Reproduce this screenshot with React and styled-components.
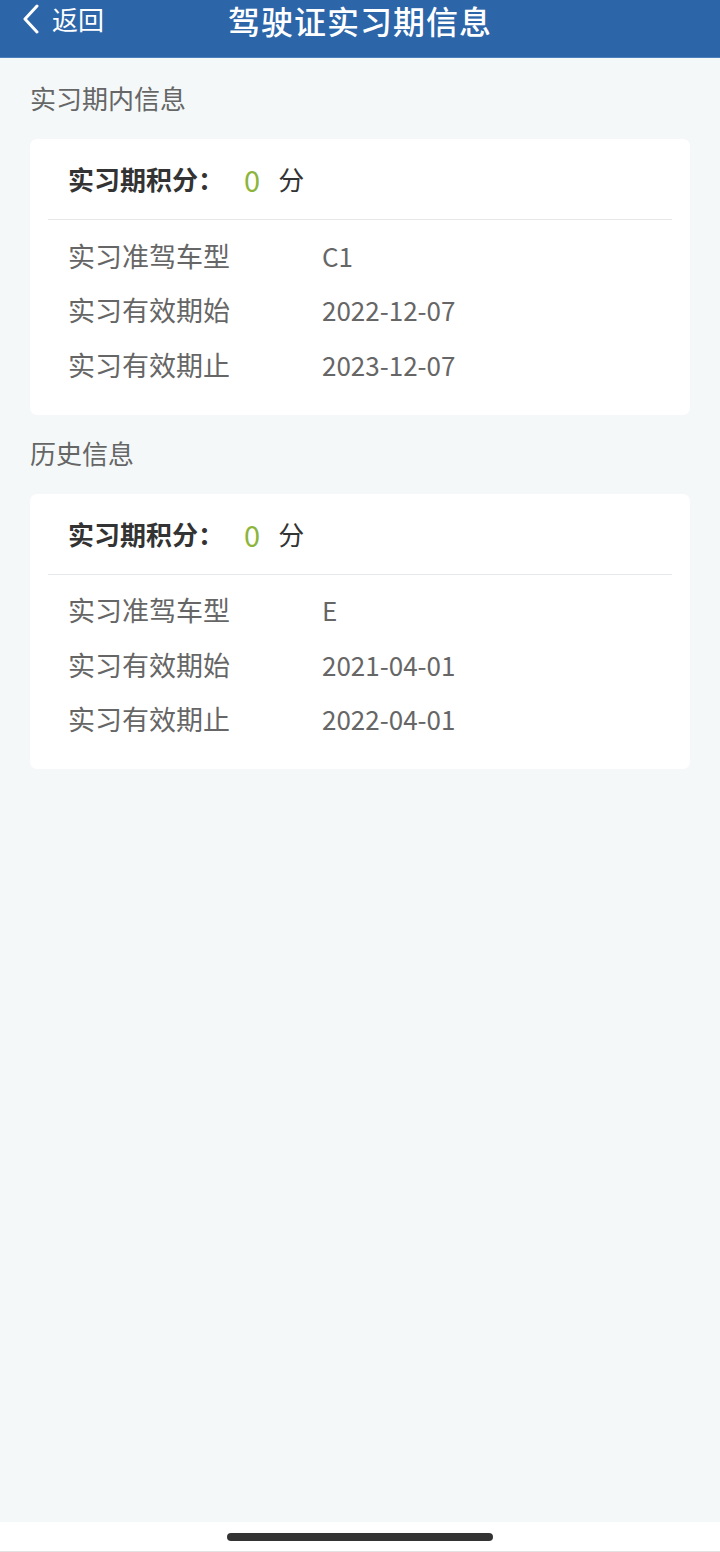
import React from "react";
import styled, { createGlobalStyle } from "styled-components";

const Global = createGlobalStyle`
  html, body { margin: 0; padding: 0; }
  body {
    font-family: "Noto Sans CJK SC", "Noto Sans", sans-serif;
    background: #f4f8f9;
  }
  * { box-sizing: border-box; }
`;

const Page = styled.div`
  display: flex;
  flex-direction: column;
  min-height: 1552px;
`;

const Header = styled.header`
  position: relative;
  height: 58px;
  background: #2c65a8;
  display: flex;
  align-items: flex-start;
  justify-content: center;
  border-bottom: 1px solid #4b80bb;
`;

const Back = styled.div`
  position: absolute;
  left: 21px;
  top: 3px;
  display: flex;
  align-items: center;
  gap: 11px;
  color: #fff;
  font-size: 26px;
  line-height: 32px;
`;

const Title = styled.h1`
  margin: 0;
  padding-top: 2px;
  color: #fff;
  font-size: 32px;
  font-weight: 500;
  line-height: 36px;
  letter-spacing: 1px;
`;

const Main = styled.main`
  flex: 1;
  background: #f4f8f9;
  padding: 20px 30px 0;
  display: flex;
  flex-direction: column;
`;

const SectionTitle = styled.div`
  font-size: 26px;
  line-height: 40px;
  color: #666;
  margin-bottom: 21px;
`;

const Card = styled.section`
  background: #fff;
  border-radius: 7px;
  padding: 20px 18px 23px;
  margin-bottom: 18px;
`;

const ScoreRow = styled.div`
  display: flex;
  align-items: center;
  padding: 0 20px 20px;
  border-bottom: 1px solid #e6e8e9;
  font-size: 26px;
  line-height: 40px;
  color: #333;
`;

const ScoreLabel = styled.span`
  font-weight: 700;
`;

const ScoreValue = styled.span`
  color: #8db53c;
  font-size: 29px;
  margin: 0 18px 0 20px;
`;

const Rows = styled.div`
  padding-top: 8px;
`;

const Row = styled.div`
  display: flex;
  align-items: center;
  height: 54.5px;
  padding-left: 20px;
  font-size: 27px;
  color: #666;
`;

const Label = styled.span`
  width: 254px;
  flex-shrink: 0;
`;

const Value = styled.span`
  font-size: 26px;
`;

const HomeBar = styled.div`
  height: 30px;
  background: #fff;
  display: flex;
  justify-content: center;
  padding-top: 11px;
  border-bottom: 1px solid #e2e2e2;
`;

const Indicator = styled.div`
  width: 266px;
  height: 8px;
  border-radius: 4px;
  background: #333;
`;

const Chevron = () => (
  <svg width="20" height="30" viewBox="0 0 20 30" fill="none">
    <path d="M16 2 L4 15 L16 28" stroke="#fff" strokeWidth="3" strokeLinecap="round" strokeLinejoin="round" />
  </svg>
);

const sections = [
  {
    title: "实习期内信息",
    score: 0,
    rows: [
      ["实习准驾车型", "C1"],
      ["实习有效期始", "2022-12-07"],
      ["实习有效期止", "2023-12-07"],
    ],
  },
  {
    title: "历史信息",
    score: 0,
    rows: [
      ["实习准驾车型", "E"],
      ["实习有效期始", "2021-04-01"],
      ["实习有效期止", "2022-04-01"],
    ],
  },
];

export default function App() {
  return (
    <Page>
      <Global />
      <Header>
        <Back>
          <Chevron />
          <span>返回</span>
        </Back>
        <Title>驾驶证实习期信息</Title>
      </Header>
      <Main>
        {sections.map((s) => (
          <React.Fragment key={s.title}>
            <SectionTitle>{s.title}</SectionTitle>
            <Card>
              <ScoreRow>
                <ScoreLabel>实习期积分：</ScoreLabel>
                <ScoreValue>{s.score}</ScoreValue>
                <span>分</span>
              </ScoreRow>
              <Rows>
                {s.rows.map(([k, v]) => (
                  <Row key={k}>
                    <Label>{k}</Label>
                    <Value>{v}</Value>
                  </Row>
                ))}
              </Rows>
            </Card>
          </React.Fragment>
        ))}
      </Main>
      <HomeBar>
        <Indicator />
      </HomeBar>
    </Page>
  );
}
